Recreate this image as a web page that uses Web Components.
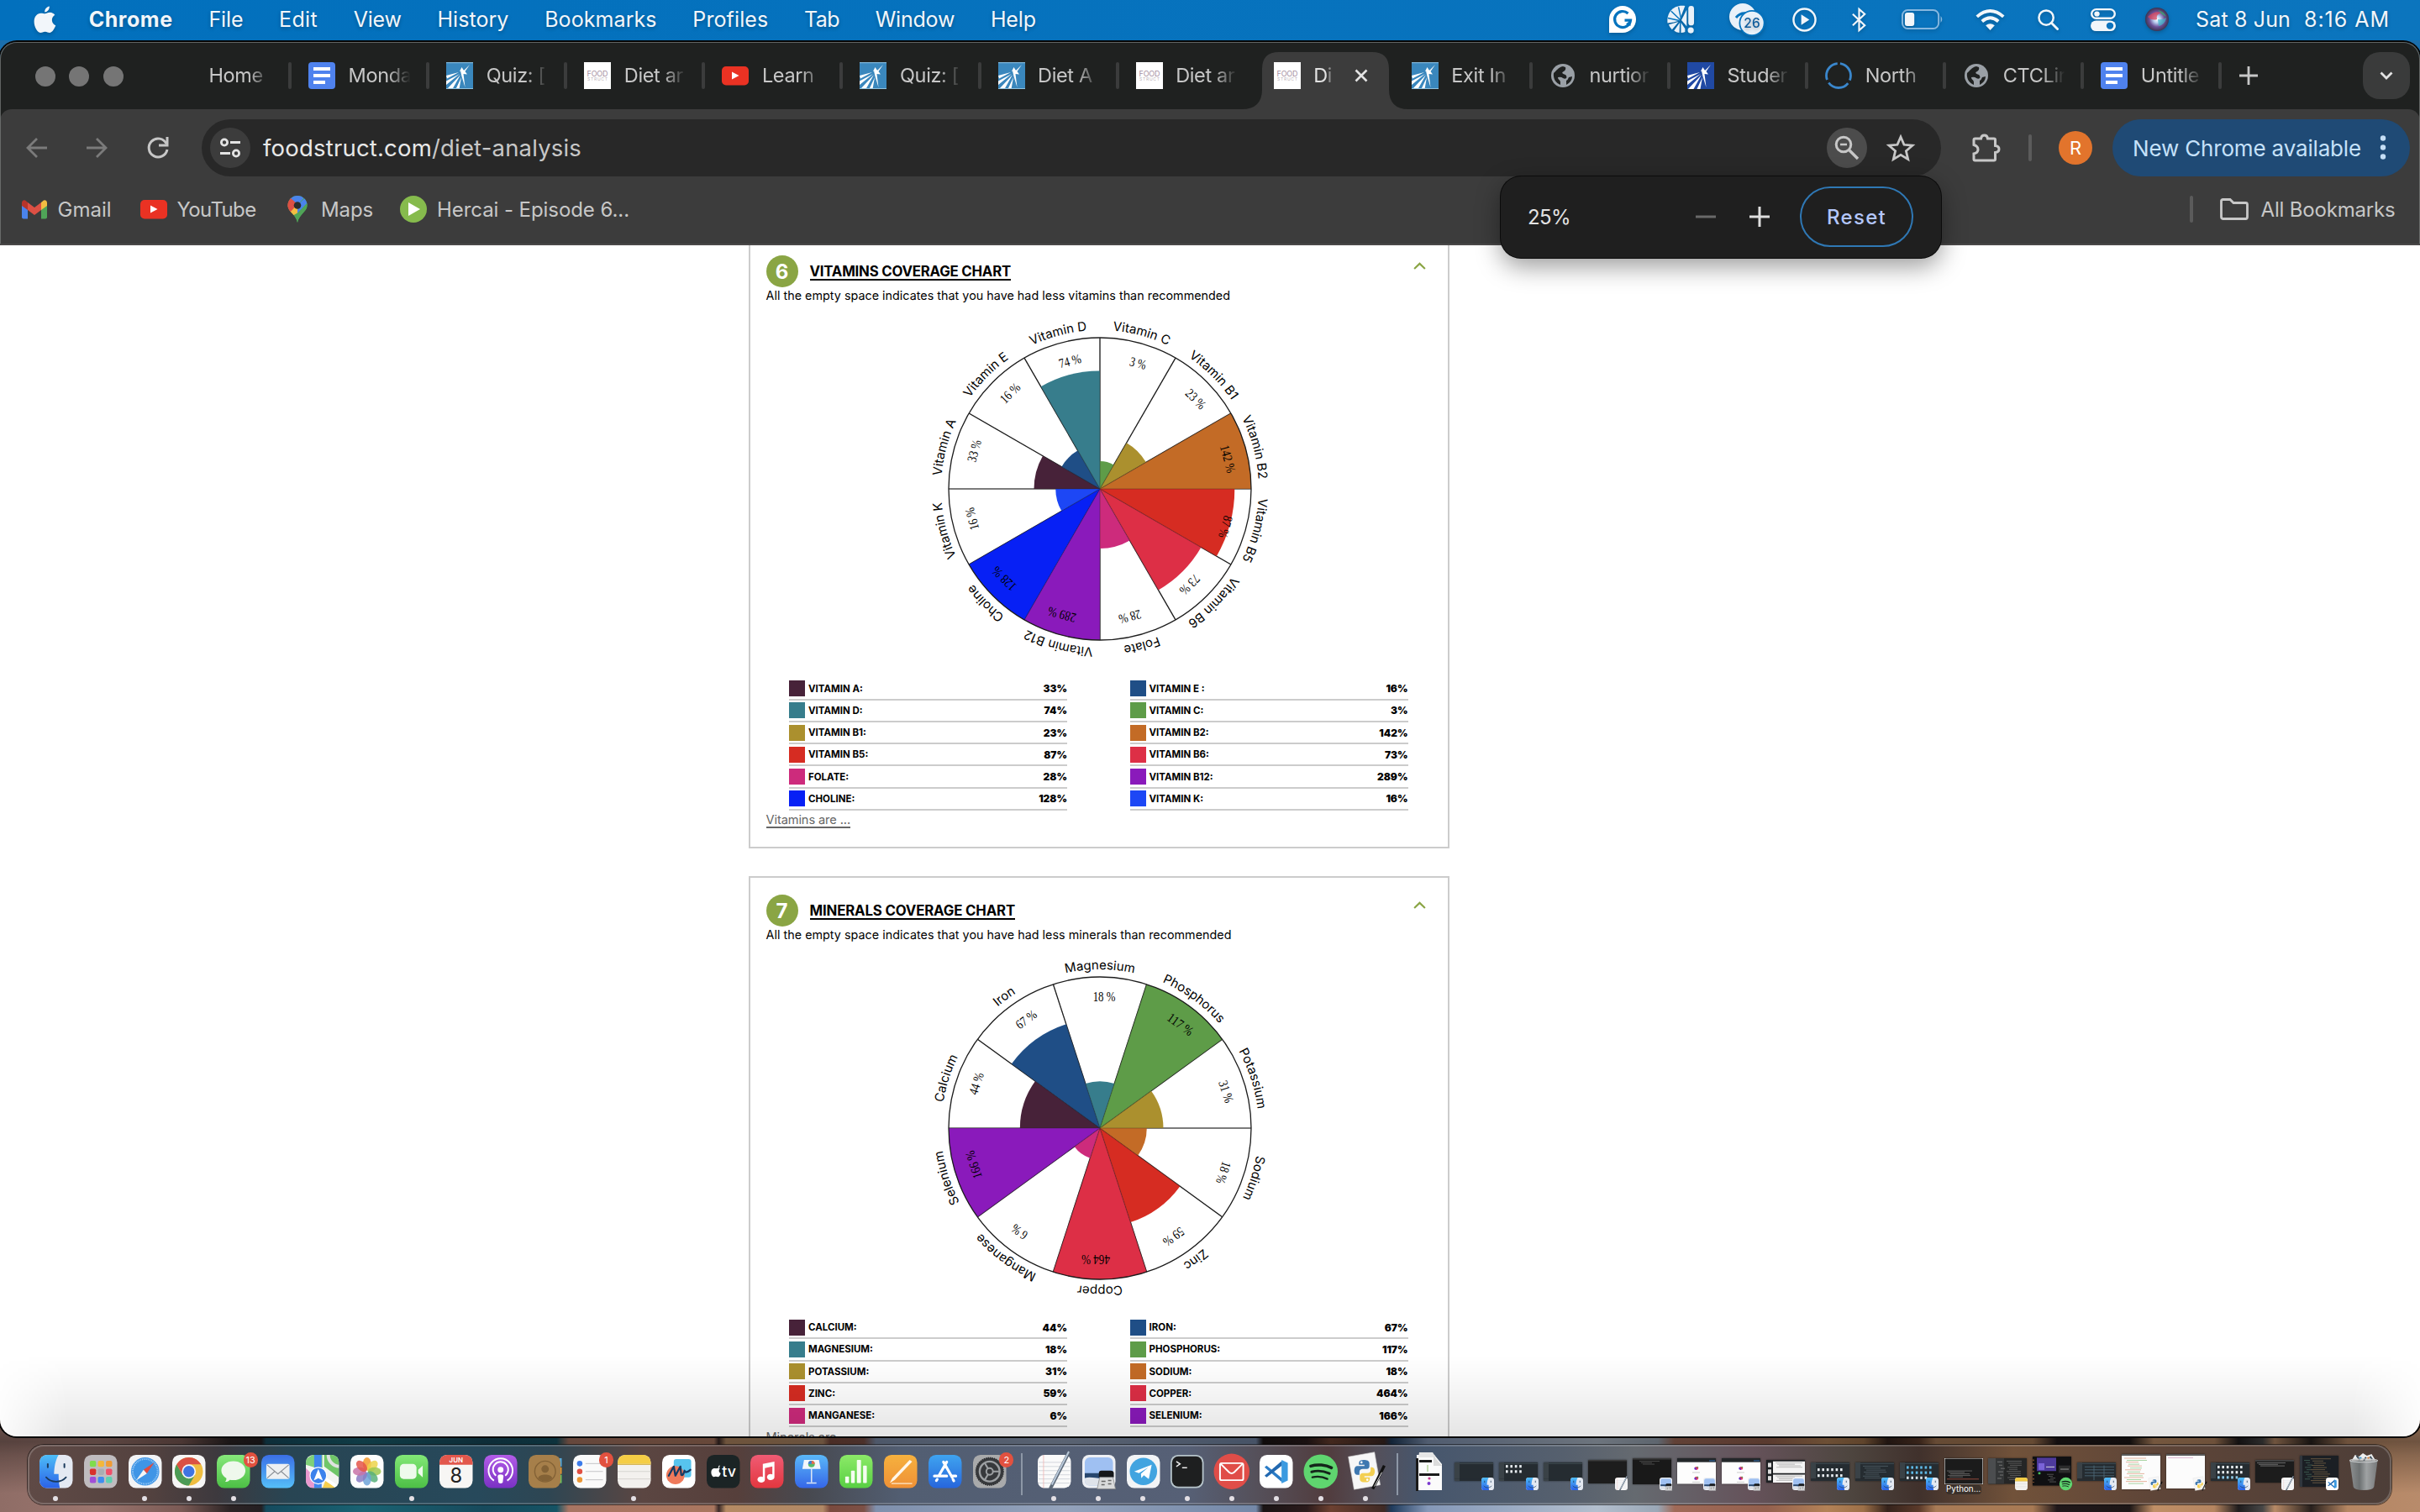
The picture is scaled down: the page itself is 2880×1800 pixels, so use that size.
<!DOCTYPE html>
<html lang="en">
<head>
<meta charset="utf-8">
<title>Diet analysis</title>
<style>
html,body{margin:0;padding:0;width:2880px;height:1800px;overflow:hidden;background:#1b6fae;font-family:Inter,"Liberation Sans",sans-serif}
</style>
</head>
<body>
<mac-desktop></mac-desktop>
<script>
const define=(name,css,html,init)=>customElements.define(name,class extends HTMLElement{
  connectedCallback(){
    if(this.shadowRoot)return;
    const r=this.attachShadow({mode:'open'});
    r.innerHTML=`<style>*{box-sizing:border-box}${css}</style>${typeof html==='function'?html(this):html}`;
    if(init)init(this,r);
  }
});
const A=(e,n,d='')=>e.getAttribute(n)??d;

/* ---------- text set to an exact advance width ---------- */
define('fit-text',':host{display:inline-block;white-space:pre;flex:none}span{display:inline-block;white-space:pre}','<span><slot></slot></span>',(e,r)=>{
  const w=+A(e,'w','0'),s=r.querySelector('span'),n=e.textContent.length;
  if(!w)return;
  const nat=s.getBoundingClientRect().width;
  s.style.letterSpacing=((w-nat)/n)+'px';
  e.style.width=w+'px';
});

/* ---------- icons ---------- */
const FINDER=`<defs><linearGradient id="a" x2="0" y2="1"><stop stop-color="#4dbdf7"/><stop offset="1" stop-color="#2b62e8"/></linearGradient></defs><rect width="40" height="40" rx="9" fill="#e4e9f2"/><path d="M9 0H23C19 7 18 14 17.500 23H23C23 30 23.500 35 24.500 40H9A9 9 0 0 1 0 31V9A9 9 0 0 1 9 0Z" fill="url(#a)"/><path d="M10 11V15M30 11V15" stroke="#1b3a5c" stroke-width="2" stroke-linecap="round"/><path d="M8 27C14 34 26 34 32 27" fill="none" stroke="#1b3a5c" stroke-width="1.800" stroke-linecap="round"/>`;
const TE=`<rect width="40" height="40" rx="8" fill="#fafafa"/><path d="M1 9H39M1 14H39M1 19H39M1 24H39M1 29H39M1 34H39" stroke="#cfd3da" stroke-width=".9"/><path d="M7 0V40" stroke="#f0b6b2" stroke-width=".8"/><path d="M38 -4L15 41" stroke="#5e6a78" stroke-width="4"/><path d="M37.500 -4L17 36" stroke="#b9c9da" stroke-width="2"/>`;
const PREV=`<rect width="40" height="40" rx="8" fill="#eef0f4"/><rect x="3" y="3" width="34" height="34" rx="6" fill="#9fc0f2"/><path d="M3 22H37V28H3Z" fill="#28476e"/><path d="M3 28C12 25 20 31 37 28V31A6 6 0 0 1 31 37H9A6 6 0 0 1 3 31Z" fill="#dfe3ea"/><path d="M20 22Q20 19 23 19H34Q38 19 38 22V27H20Z" fill="#15171a"/><path d="M21 27H37L40 41H18Z" fill="#d9dadb" stroke="#88898a" stroke-width=".8"/><path d="M23 32h5M31 31h4M23 36h4M31 35h4" stroke="#666" stroke-width="1.500"/>`;
const SPOT=`<circle cx="20" cy="20" r="20.500" fill="#5fd56f"/><g fill="none" stroke="#14251a" stroke-linecap="round"><path d="M8 13.500C16 11 26 12 33 15.500" stroke-width="3.600"/><path d="M9 20.500C16 18.500 24 19.500 30.500 22.500" stroke-width="3"/><path d="M10 27C16 25.500 22 26 28 29" stroke-width="2.400"/></g>`;
const VS=`<rect width="40" height="40" rx="9" fill="#fff"/><path d="M6 15L8.500 13L27 28V33Z" fill="#2a7cc7"/><path d="M6 25L8.500 27L27 13V7Z" fill="#2168b0"/><path d="M26.500 6L34 9.500V31L26.500 34.500Z" fill="#3b9ae0"/>`;
const PY=`<g transform="rotate(-10 20 20)"><rect x="3" y="-1" width="32" height="40" fill="#f7f7f7" stroke="#cfcfcf" stroke-width=".6"/></g><path d="M18 6C12 6 12.500 9 12.500 12H19V13.500H10C6 13.500 5.500 24 10 24H13V20.500C13 18 15 17 17 17H22C24 17 25 15.500 25 14V10C25 7 22 6 18 6Z" fill="#3e78b0"/><path d="M20 33C26 33 25.500 30 25.500 27H19V25.500H28C32.500 25.500 33 15 28 15H26.500V18.500C26.500 21 24.500 22 22.500 22H17C15 22 13.500 23.500 13.500 25V29C13.500 32 16 33 20 33Z" fill="#f3cf52"/><circle cx="15.500" cy="9" r="1.300" fill="#fff"/><circle cx="22.500" cy="30" r="1.300" fill="#fff"/><path d="M43 13L29 41" stroke="#111" stroke-width="3.400"/><path d="M40 21L31 38" stroke="#ddd" stroke-width="1"/>`;
const gl=(a,b)=>`<defs><linearGradient id="a" x2="0" y2="1"><stop stop-color="${a}"/><stop offset="1" stop-color="${b}"/></linearGradient></defs><rect width="40" height="40" rx="9" fill="url(#a)"/>`;
const STAR=(bg)=>`<rect width="32" height="32" fill="${bg}"/><g fill="#fff"><path d="M28 3L22.500 11L25 14.500L20.500 14L22.500 30L18.500 17L17 10.500L21.500 9.500Z"/><path d="M18.500 6L21 10L16 11Z"/><path d="M0 16L15 12L1 19.500Z M0 22.500L16 14L0 27Z M1 32L17 15L7.500 32Z M11.500 32L18 18L15.500 32Z"/></g>`;
const ICONS={
finder:['0 0 40 40',FINDER],
launchpad:['0 0 40 40',`<rect width="40" height="40" rx="9" fill="#bfbcbf"/>`+['#7fdc4c','#f4b73a','#f09b35','#d8322c','#a9adb3','#f0506a','#a14ed8','#3f8df0','#5fd0b0'].map((c,i)=>`<rect x="${7+i%3*9.700}" y="${7+Math.floor(i/3)*9.700}" width="7.500" height="7.500" rx="1.800" fill="${c}"/>`).join('')],
safari:['0 0 40 40',`<rect width="40" height="40" rx="9" fill="#f2f3f5"/><circle cx="20" cy="20" r="17" fill="#3f95e6"/><circle cx="20" cy="20" r="15" fill="none" stroke="#bfe0fb" stroke-width="2" stroke-dasharray=".7 1.250"/><path d="M31 9L22 22.500L18 18Z" fill="#e34b3e"/><path d="M9 31L22 22.500L18 18Z" fill="#f5f5f5"/>`],
chrome:['0 0 40 40',`<rect width="40" height="40" rx="9" fill="#f6f6f6"/><circle cx="20" cy="20" r="17" fill="#eebd40"/><path d="M20 20L12.640 24.250L5.280 11.500A17 17 0 0 0 20 37L27.360 24.250Z" fill="#4c9b56"/><path d="M5.280 11.500A17 17 0 0 1 34.720 11.500H20L12.640 24.250Z" fill="#da5144"/><circle cx="20" cy="20" r="8.500" fill="#f6f6f6"/><circle cx="20" cy="20" r="6.800" fill="#3f74e2"/>`],
messages:['0 0 40 40',gl('#86e87b','#4cbf45')+`<path d="M20 7.500C28.500 7.500 34.500 12.500 34.500 19S28.500 30.500 20 30.500C18.500 30.500 17 30.300 15.700 30C14 31.800 12 32.500 10 32.500C11.300 31 11.700 29.500 11.500 28C7.800 26 5.500 22.800 5.500 19C5.500 12.500 11.500 7.500 20 7.500Z" fill="#eef8ec"/>`],
mail:['0 0 40 40',gl('#3b6fe6','#55bff9')+`<rect x="6" y="11" width="28" height="18" rx="2" fill="#eef0f2"/><path d="M7 12L20 23L33 12M7 28L16 20M33 28L24 20" fill="none" stroke="#888d94" stroke-width="1.100"/>`],
maps:['0 0 40 40',`<defs><clipPath id="c"><rect width="40" height="40" rx="9"/></clipPath></defs><g clip-path="url(#c)"><rect width="40" height="40" fill="#f4f4f1"/><path d="M0 5L8 0H20V18L0 12Z" fill="#7fd079"/><path d="M22 0H40V27L22 14Z" fill="#70c668"/><path d="M27 0A14 14 0 0 0 40 14" fill="none" stroke="#dfe2e0" stroke-width="4"/><path d="M0 16L10 26V40H0Z" fill="#e899cf"/><path d="M24 30L36 40H20Z" fill="#f6cf4d"/><rect x="10" width="9" height="40" fill="#3f86ee"/><path d="M13 22L40 40" stroke="#fff" stroke-width="4"/></g><circle cx="15" cy="25" r="10" fill="#3c82ec" stroke="#fff" stroke-width="1.200"/><path d="M15 17L20.500 31L15 28L9.500 31Z" fill="#fff"/>`],
photos:['0 0 40 40',`<rect width="40" height="40" rx="9" fill="#fdfdfd"/>`+['#f39a2d','#ecd44a','#9fc84f','#58b07a','#6fa3d8','#8a7cc4','#c873a8','#e5564a'].map((c,i)=>`<ellipse cx="20" cy="11" rx="5" ry="8" fill="${c}" opacity=".85" transform="rotate(${i*45} 20 20)"/>`).join('')],
facetime:['0 0 40 40',gl('#82e876','#4dbf46')+`<rect x="6" y="11" width="20" height="18" rx="4.500" fill="#eefaec"/><path d="M28 18L33.500 13V27L28 22Z" fill="#eefaec"/>`],
calendar:['0 0 40 40',`<rect width="40" height="40" rx="9" fill="#f7f6f4"/><path d="M0 12V9A9 9 0 0 1 9 0H31A9 9 0 0 1 40 9V12Z" fill="#e2574c"/><text x="20" y="9.500" font-family="Inter" font-weight="600" font-size="8" fill="#fff" text-anchor="middle">JUN</text><text x="20" y="33.500" font-family="Inter" font-size="24" font-weight="400" fill="#222" text-anchor="middle">8</text>`],
podcasts:['0 0 40 40',gl('#b35ce8','#7a31c4')+`<g fill="none" stroke="#fff" stroke-width="2"><path d="M12 31A14.500 14.500 0 1 1 28 31"/><path d="M14.500 25A9.200 9.200 0 1 1 25.500 25"/></g><circle cx="20" cy="18" r="3.500" fill="#fff"/><path d="M16.500 26Q16.500 23.500 20 23.500T23.500 26L22.500 33.500Q20 35.500 17.500 33.500Z" fill="#fff"/>`],
contacts:['0 0 40 40',`<rect x="34" y="4" width="6" height="10" fill="#57a9dc"/><rect x="34" y="15" width="6" height="8" fill="#e5952f"/><rect x="34" y="24" width="6" height="10" fill="#6fc05c"/><rect width="38.500" height="40" rx="9" fill="#a67f4a"/><circle cx="20" cy="20" r="12.500" fill="none" stroke="#836236" stroke-width="1.400"/><circle cx="20" cy="17" r="4.500" fill="#836236"/><path d="M11.500 28C13 22.500 27 22.500 28.500 28Q20 36 11.500 28Z" fill="#836236"/>`],
reminders:['0 0 40 40',`<rect width="40" height="40" rx="9" fill="#fafafa"/><circle cx="8" cy="10.500" r="3.300" fill="#3c7bea"/><circle cx="8" cy="20" r="3.300" fill="#e14f42"/><circle cx="8" cy="30" r="3.300" fill="#eb9735"/><path d="M15 10.500H36M15 20H36M15 30H36" stroke="#c4c4c6" stroke-width="1"/>`],
notes:['0 0 40 40',`<rect width="40" height="40" rx="9" fill="#f3f1ee"/><path d="M0 11V9A9 9 0 0 1 9 0H31A9 9 0 0 1 40 9V11Z" fill="#f5cd45"/><path d="M0 11.500H40" stroke="#cfa93a" stroke-width="1"/><path d="M0 20H40M0 29H40" stroke="#d5d3cf"/>`],
freeform:['0 0 40 40',`<rect width="40" height="40" rx="9" fill="#fff"/><rect x="14" y="5" width="21" height="22" rx="3" fill="#57c4ee"/><circle cx="16" cy="24.500" r="11" fill="#ef7a5b"/><path d="M8 25L14 14L16 25L22 14L23 24Q25 26 27 19Q28 23 34 18" fill="none" stroke="#143a63" stroke-width="2.300" stroke-linejoin="round" stroke-linecap="round"/>`],
tv:['0 0 40 40',`<rect width="40" height="40" rx="9" fill="#1b2425"/><g transform="translate(5.500 12.500) scale(.44)"><path d="M20 8C18 5 21 1 23 0C24 4 22 7 20 8ZM13 9C17 9 18 7 24 9C20 12 20 19 26 22C24 28 21 32 18 32S14 31 12 31S8 32 6 32C2 30 -1 23 0 17C1 11 5 9 8 8.500C10 8.500 12 9 13 9Z" fill="#fff"/></g><text x="18.500" y="26.500" font-family="Inter" font-weight="500" font-size="18" fill="#fff">tv</text>`],
music:['0 0 40 40',gl('#f05b74','#e2373f')+`<path d="M15 11L29 8V27A4.500 3.600 0 1 1 26.500 23.500V14L17.500 16V30A4.500 3.600 0 1 1 15 26.500Z" fill="#fff"/>`],
keynote:['0 0 40 40',gl('#5ab8f8','#3566e8')+`<path d="M11 6H29L31 17H9Z" fill="#f2f6fb"/><circle cx="20" cy="11" r="4" fill="#58b96a"/><path d="M20 7A4 4 0 0 1 24 11H20Z" fill="#ee6a4c"/><path d="M16 11A4 4 0 0 1 20 7V11Z" fill="#3f78df"/><path d="M20 17V33M14 34H26" stroke="#dbe6f5" stroke-width="1.600"/>`],
numbers:['0 0 40 40',gl('#8cea68','#58cf43')+`<g fill="#f4fdf0"><rect x="7" y="26" width="4.500" height="8" rx=".8"/><rect x="14" y="19" width="4.500" height="15" rx=".8"/><rect x="21" y="6" width="5" height="28" rx=".8"/><rect x="28.500" y="13" width="4.500" height="21" rx=".8"/></g>`],
pages:['0 0 40 40',gl('#f6b13e','#ef9136')+`<path d="M31 6L34 8L13 30L7 34L10 28Z" fill="#fff7ea"/><path d="M9 34.500H34" stroke="#fff0d8" stroke-width="1.200"/>`],
appstore:['0 0 40 40',gl('#3fa4f0','#2766dc')+`<g stroke="#fff" stroke-width="3.200" stroke-linecap="round" fill="none"><path d="M22 8.500L12.500 25M18 8.500L28.500 27M7 25.500H22M28 25.500H33M10.500 29.500L9.500 31M29.500 29.500L30.500 31.300"/></g>`],
settings:['0 0 40 40',`<rect width="40" height="40" rx="9" fill="#a9aaab"/><circle cx="20" cy="20" r="16.500" fill="#37393c" stroke="#2b2c2e" stroke-width="1.500" stroke-dasharray="1.500 1"/><circle cx="20" cy="20" r="12" fill="none" stroke="#9da0a3" stroke-width="2.400"/><circle cx="20" cy="20" r="4" fill="none" stroke="#9da0a3" stroke-width="2"/><path d="M24 20H32M18 16.500L14 9.600M18 23.500L14 30.400" stroke="#9da0a3" stroke-width="2.200"/>`],
textedit:['0 0 40 40',TE],preview:['0 0 40 40',PREV],
telegram:['0 0 40 40',`<rect width="40" height="40" rx="9" fill="#f2f4f6"/><circle cx="20" cy="20" r="16.500" fill="#41a4e0"/><path d="M9 20L30 12L26.500 29L20.500 24.500L17.500 28L17 22.800L26 15L14.500 22Z" fill="#fff"/>`],
terminal:['0 0 40 40',`<rect width="40" height="40" rx="9" fill="#b8c6cc"/><rect x="1.800" y="1.800" width="36.400" height="36.400" rx="7.500" fill="#1e1f20"/><path d="M7 8L11.500 11L7 14" fill="none" stroke="#eee" stroke-width="1.500"/><path d="M14 15.500H20" stroke="#eee" stroke-width="1.500"/>`],
redmail:['0 0 40 40',`<circle cx="20" cy="20" r="21.500" fill="#e04d48"/><rect x="6" y="10" width="28" height="20.500" rx="2" fill="none" stroke="#fff" stroke-width="2"/><path d="M7 11L17 21Q20 23.500 23 21L33 11" fill="none" stroke="#fff" stroke-width="2"/>`],
vscode:['0 0 40 40',VS],spotify:['0 0 40 40',SPOT],idle:['0 0 40 40',PY],
apple:['0 0 28 34',`<path d="M19.500 0.500C19.800 4.500 16.500 7.800 13.700 7.700C13.300 4.200 16.600 .8 19.500 .5ZM13.900 9.600C15.500 9.600 17.400 8 20.300 8C22.800 8.100 24.900 9.300 26.200 11.200C21 14.600 21.800 21.700 27.200 24C26 27.600 22.900 33 19.700 33C17.600 33 16.700 31.700 14.200 31.700C11.600 31.700 10.600 33 8.700 33C5.200 33 .6 26.100 .6 19.200C.6 12.700 4.700 8.900 8.800 8.900C11.200 8.900 12.800 9.600 13.900 9.600Z" fill="#f2f6fa"/>`],
grammarly:['0 0 32 32',`<path d="M16 0A16 16 0 1 1 16 32H0V16A16 16 0 0 1 16 0Z" fill="#fff"/><path d="M22.500 9A9.500 9.500 0 1 0 25.500 17.200H18.500" fill="none" stroke="#0573be" stroke-width="3.200"/><path d="M20 21.500L25.500 24V17" fill="#0573be"/>`],
shell:['0 0 34 34',`<path d="M22 0C8 -2 -1 8 0.500 21L8 20L15 18Z" fill="#e9f1f9"/><path d="M2 23L14 19.500L6 29Q3 26.500 2 23ZM8.500 30.500L15.500 20.500L15 33Q11 33 8.500 30.500ZM17 33V20.500L22 28V32Q20 33 17 33Z" fill="#e9f1f9"/><path d="M17.500 17.500L24 5V25Z" fill="#e9f1f9"/><path d="M14 1.500L17 15.500M5 6.500L16 17M1 15L15 18" stroke="#0573be" stroke-width="1.500"/><rect x="26" y="0" width="7" height="24" rx="3.500" fill="#e9f1f9"/><circle cx="29" cy="30" r="3.700" fill="#e9f1f9"/>`],
chat26:['0 0 42 38',`<circle cx="16" cy="16" r="16" fill="#e9f1f9"/><path d="M8 17Q13 11 20 12" stroke="#0573be" stroke-width="3" fill="none"/><circle cx="27" cy="23.500" r="15.500" fill="#0573be"/><circle cx="27" cy="23.500" r="13.700" fill="#e9f1f9"/><text x="27" y="29" text-anchor="middle" font-family="Inter" font-weight="500" font-size="15.500" fill="#0f5c9c">26</text>`],
play:['0 0 30 30',`<circle cx="15" cy="15" r="13.500" fill="none" stroke="#f2f6fa" stroke-width="2.500"/><path d="M11 8.500L21 15L11 21.500Z" fill="#f2f6fa"/>`],
bt:['0 0 20 30',`<path d="M2 8L17 22L10 28V2L17 8L2 22" fill="none" stroke="#f2f6fa" stroke-width="2.300"/>`],
battery:['0 0 51 24',`<rect x="1" y="1" width="44" height="22" rx="6.500" fill="none" stroke="#86b8e0" stroke-width="2"/><rect x="4" y="4" width="11.500" height="16" rx="3" fill="#f2f6fa"/><path d="M47.500 8Q51 12 47.500 16Z" fill="#86b8e0"/>`],
wifi:['0 0 36 26',`<path d="M18 26L12.500 20Q18 16 23.500 20Z" fill="#f2f6fa"/><path d="M8 15Q18 6.500 28 15" fill="none" stroke="#f2f6fa" stroke-width="4"/><path d="M1.800 9.200Q18 -5 34.200 9.200" fill="none" stroke="#f2f6fa" stroke-width="4"/>`],
search:['0 0 26 26',`<circle cx="10.500" cy="10.500" r="9" fill="none" stroke="#f2f6fa" stroke-width="2.600"/><path d="M17 17L24.500 24.500" stroke="#f2f6fa" stroke-width="3" stroke-linecap="round"/>`],
control:['0 0 30 28',`<rect x="1.200" y="1.200" width="27.600" height="11" rx="5.500" fill="none" stroke="#f2f6fa" stroke-width="2.400"/><circle cx="7.500" cy="6.700" r="3.200" fill="#f2f6fa"/><rect y="15" width="30" height="13" rx="6.500" fill="#f2f6fa"/><circle cx="23" cy="21.500" r="4.200" fill="#0d73bd"/>`],
siri:['0 0 28 28',`<defs><radialGradient id="a"><stop stop-color="#fff"/><stop offset=".3" stop-color="#b9cdf0"/><stop offset=".65" stop-color="#6b4f96"/><stop offset="1" stop-color="#3b3550"/></radialGradient></defs><circle cx="14" cy="14" r="14" fill="url(#a)"/><path d="M3 11Q11 3 20 6Q12 8 14 14Q8 16 3 11Z" fill="#d8435a" opacity=".75"/><path d="M16 22Q24 20 25 12Q21 15 15 14Z" fill="#3fb6c9" opacity=".7"/><path d="M15 3Q23 5 25 11Q19 8 15 3Z" fill="#3ba56e" opacity=".8"/>`],
docs:['0 0 32 32',`<rect width="32" height="32" rx="4" fill="#4f82ee"/><path d="M6 8H26M6 16H26M6 24H20" stroke="#fff" stroke-width="4"/>`],
swoosh:['0 0 32 32',STAR('#3a87bd')+`<path d="M0 .7H32M0 31.500H32" stroke="#8fc0dd" stroke-width="1"/>`],
swooshdark:['0 0 32 32',STAR('#2049a3')],
food:['0 0 32 32',`<rect width="32" height="32" fill="#fff"/><text x="16" y="17" font-family="Inter" font-size="9" font-weight="400" fill="#a58f9f" text-anchor="middle" textLength="25">FOOD</text><text x="16" y="21.500" font-family="Inter" font-size="5" fill="#bdb4ba" text-anchor="middle" textLength="24">STRUCT</text>`],
youtube:['0 0 32 32',`<rect y="5" width="32" height="22.500" rx="5" fill="#ea3223"/><path d="M12 11.500L20.500 16L12 20.500Z" fill="#fff"/>`],
globe:['0 0 32 32',`<circle cx="16" cy="16" r="14" fill="#9aa0a6"/><path d="M16 5C10 6 8 11 5 13C4 20 8 25 13 27V24C13 21 10 21 10 18Q14 17 16 19C20 21 22 18 19 15C15 14 14 12 17 11Q20 9 19 6Z" fill="#1f2120"/><path d="M20 27Q27 23 27 17L23 18Q22 21 20 22Z" fill="#1f2120"/>`],
ring:['0 0 32 32',`<circle cx="16" cy="16" r="14.500" fill="none" stroke="#3a87cc" stroke-width="2.800" stroke-dasharray="26.400 4" stroke-dashoffset="-2" transform="rotate(-90 16 16)"/>`],
none:['0 0 32 32',''],
close:['0 0 16 16',`<path d="M1.500 1.500L14.500 14.500M14.500 1.500L1.500 14.500" stroke="#e3e3e3" stroke-width="2.600"/>`],
plus:['0 0 22 22',`<path d="M11 0V22M0 11H22" stroke="#c7c7c7" stroke-width="2.800"/>`],
chev:['0 0 16 10',`<path d="M1.500 1.500L8 8L14.500 1.500" fill="none" stroke="#e3e3e3" stroke-width="2.800"/>`],
back:['0 0 26 26',`<path d="M25 13H2.500M13 2L2 13L13 24" fill="none" stroke="#7b7b7b" stroke-width="2.800"/>`],
fwd:['0 0 26 26',`<path d="M1 13H23.500M13 2L24 13L13 24" fill="none" stroke="#7b7b7b" stroke-width="2.800"/>`],
reload:['0 0 26 26',`<path d="M23 8A11 11 0 1 0 24 15" fill="none" stroke="#c7c7c7" stroke-width="3"/><path d="M24 0V10H14" fill="none" stroke="#c7c7c7" stroke-width="3"/>`],
tune:['0 0 24 24',`<g fill="none" stroke="#e3e3e3" stroke-width="2.800"><circle cx="5" cy="5.500" r="3.600"/><path d="M12 5.500H24M0 18.500H12"/><circle cx="19" cy="18.500" r="3.600"/></g>`],
zoomout:['0 0 30 30',`<circle cx="11" cy="11" r="8.800" fill="none" stroke="#c7c7c7" stroke-width="3"/><path d="M7 11H15" stroke="#c7c7c7" stroke-width="2.400"/><path d="M17.500 17.500L28 28" stroke="#c7c7c7" stroke-width="3.400"/>`],
star:['0 0 34 32',`<path d="M17 3L21 12.300L31 13.200L23.400 19.800L25.700 29.600L17 24.400L8.300 29.600L10.600 19.800L3 13.200L13 12.300Z" fill="none" stroke="#c7c7c7" stroke-width="2.800"/>`],
puzzle:['0 0 34 34',`<path d="M2 7.500Q2 6 3.500 6H10.500Q11 2 14.500 2T18.500 6H26Q27.500 6 27.500 7.500V14.500Q32 15 32 18.500T27.500 22.500V30.500Q27.500 32 26 32H3.500Q2 32 2 30.500V24Q7 23 7 19T2 13.500Z" fill="none" stroke="#c7c7c7" stroke-width="3"/>`],
dots:['0 0 8 30',`<g fill="#c5def5"><circle cx="4" cy="3.500" r="3.200"/><circle cx="4" cy="14.500" r="3.200"/><circle cx="4" cy="25.500" r="3.200"/></g>`],
gmail:['0 0 30 23',`<path d="M0 3V20.500Q0 22.500 2 22.500H7V8Z" fill="#4a83ec"/><path d="M23 8V22.500H28Q30 22.500 30 20.500V3Z" fill="#4fa457"/><path d="M23 3V12L30 7V3Q29.500 -.5 26 .5Z" fill="#f2bd42"/><path d="M7 3V12L0 7V3Q.5 -.5 4 .5Z" fill="#b8342a"/><path d="M7 3L15 9L23 3V12L15 18L7 12Z" fill="#dd5044"/>`],
pin:['0 0 24 32',`<defs><clipPath id="c"><path d="M12 0A11.500 11.500 0 0 1 23.500 11.500C23.500 19 14 22 12 32C10 22 .5 19 .5 11.500A11.500 11.500 0 0 1 12 0Z"/></clipPath></defs><g clip-path="url(#c)"><rect width="24" height="32" fill="#4fa457"/><path d="M0 6L12 11L3 22H0Z" fill="#dd5044"/><path d="M0 20L14 5L18 17L6 24Z" fill="#f2bd42"/><path d="M2 0H22L12 11L3 5Z" fill="#4a83ec"/><path d="M0 4L4 3L12 10L4 19H0Z" fill="#dd5044"/><path d="M12 11L24 0V10L12 25Z" fill="#4a83ec"/><path d="M24 8L8 25V32H24Z" fill="#4fa457"/></g><circle cx="12" cy="11.500" r="4.300" fill="#2c2c2c"/>`],
hercai:['0 0 32 32',`<circle cx="16" cy="16" r="16" fill="#86bb4d"/><path d="M10 8L24 16L10 24Z" fill="#fff"/>`],
folder:['0 0 34 26',`<path d="M1.500 3.500Q1.500 1.500 3.500 1.500H12L16 5.500H30.500Q32.500 5.500 32.500 7.500V22Q32.500 24.500 30.500 24.500H3.500Q1.500 24.500 1.500 22Z" fill="none" stroke="#c7c7c7" stroke-width="2.800"/>`],
minus:['0 0 24 24',`<path d="M0 12H24" stroke="#696969" stroke-width="3"/>`],
plus2:['0 0 24 24',`<path d="M0 12H24M12 0V24" stroke="#dedede" stroke-width="3"/>`],
up:['0 0 16 9',`<path d="M1.200 8L8 1.800L14.800 8" fill="none" stroke="#8aa544" stroke-width="2.300"/>`],
doc:['0 0 32 46',`<path d="M1 3H22L31 14V45H1Z" fill="#fbfbfb"/><path d="M0 7H3V46H0Z" fill="#1a1a1a"/><path d="M4 9H19V12H4ZM4 25H28V28H4Z" fill="#1a1a1a"/><path d="M4 0H20L24 6H3Z" fill="#e6e6e6"/><path d="M21 4V16H31Z" fill="#dcdcdc"/><path d="M14 15V23" stroke="#8fbf6a" stroke-width="1"/><circle cx="16" cy="31" r="1.600" fill="#c23a8a"/><circle cx="15.500" cy="37" r="2" fill="#7b3ad0"/>`],
trash:['0 0 36 46',`<defs><linearGradient id="a"><stop stop-color="#8d9091"/><stop offset=".35" stop-color="#6d7172"/><stop offset=".6" stop-color="#9fa2a3"/><stop offset="1" stop-color="#77797a"/></linearGradient></defs><path d="M3 10L7 3L12 5L17 1L22 4L28 2L33 10Z" fill="#eceeee"/><path d="M9 4L13 9M21 6L18 10M26 5L29 9" stroke="#3b4b57" stroke-width="2"/><circle cx="14" cy="7" r="1.500" fill="#3f9ad2"/><circle cx="24" cy="7" r="1.500" fill="#d9813d"/><path d="M.5 10H35.500L31 42Q30 46 18 46T5 42Z" fill="url(#a)"/><ellipse cx="18" cy="10" rx="17.500" ry="2" fill="none" stroke="#c5c8c9" stroke-width="1.200"/>`]
};
define('ui-icon',':host{display:block;flex:none}svg{display:block;width:100%;height:100%;overflow:visible}',e=>{
  const [vb,s]=ICONS[A(e,'name')];return `<svg viewBox="${vb}" preserveAspectRatio="none">${s}</svg>`},
  e=>{e.style.width=A(e,'w')+'px';e.style.height=A(e,'h',A(e,'w'))+'px'});
const ic=(n,w,h=w,m=0)=>`<ui-icon name="${n}" w="${w}" h="${h}" style="margin-left:${m}px"></ui-icon>`;
const ft=(t,w,m=0,c='')=>`<fit-text class="${c}" w="${w}" style="margin-left:${m}px">${t}</fit-text>`;

/* ---------- menu bar ---------- */
define('menu-bar',`:host{display:flex;justify-content:space-between;align-items:center;height:48px;padding:0 36px 2px 40px;background:linear-gradient(90deg,#0270bd,#0b75be);color:#f2f6fa;font-size:25px;text-shadow:0 2px 4px #0004}
nav,div{display:flex;align-items:center}nav{gap:42.700px}ui-icon{filter:drop-shadow(0 2px 2px #0003)}.b{font-weight:700}`,
`<nav>${ic('apple',27,33)}${ft('Chrome',100,-4,'b')}${[['File',41],['Edit',46],['View',57],['History',85],['Bookmarks',133.500],['Profiles',90],['Tab',42],['Window',94.500],['Help',54]].map(a=>ft(...a)).join('')}</nav>
<div>${ic('grammarly',32)}${ic('shell',33,33,37)}${ic('chat26',42,38,41)}${ic('play',29,29,33)}${ic('bt',19,29,41)}${ic('battery',50,24,41)}${ic('wifi',35,25,38)}${ic('search',25,25,39)}${ic('control',30,27,38)}${ic('siri',28,28,35)}${ft('Sat 8 Jun',113,32)}${ft('8:16 AM',102,16)}</div>`);

/* ---------- tabs ---------- */
define('browser-tab',`:host{display:flex;flex:none;align-items:center;width:164.1px;height:80px;padding:0 0 1px 22px;position:relative;font-size:23.500px;color:#c7c7c7}
.t{width:75px;height:34px;line-height:34px;margin-left:15.500px;overflow:hidden;white-space:pre;letter-spacing:-.35px;-webkit-mask-image:linear-gradient(90deg,#000 62%,transparent 98%);mask-image:linear-gradient(90deg,#000 62%,transparent 98%)}
.s{width:4px;height:32px;margin-left:auto;margin-right:-2px;border-radius:2px;background:#3b3c3c}
:host([nosep]) .s{visibility:hidden}
:host([home]) .t{margin-left:13.500px}
:host([active]) .t{width:24px;color:#e3e3e3}
:host([active]) ui-icon,:host([active]) .t{position:relative}
.bg{display:none}:host([active]) .bg{display:block;position:absolute;left:-16px;top:12px;width:198px;height:68px}`,
e=>`<svg class="bg" viewBox="0 0 198 68"><path d="M0 68Q24 68 24 44V20Q24 0 44 0H155Q175 0 175 20V44Q175 68 198 68Z" fill="#3c3c3c"/></svg>${ic(A(e,'icon'),32)}<div class="t"><slot></slot></div>${e.hasAttribute('active')?`<ui-icon name="close" w="16" h="16" style="margin-left:25px;position:relative"></ui-icon>`:''}<div class="s"></div>`);
define('tab-strip',`:host{display:flex;align-items:center;height:80px;background:#1f2120;padding-left:42px;padding-right:12px}
.l{display:flex;gap:16.400px;width:139px;padding-top:2px}.l i{width:24px;height:24px;border-radius:50%;background:#757575}
.d{width:56px;height:56px;border-radius:20px;background:#3a3b3b;margin-left:auto;display:flex;align-items:center;justify-content:center}`,
`<div class="l"><i></i><i></i><i></i></div>${[['none','Home','home'],['docs','Monda'],['swoosh','Quiz: ['],['food','Diet ar'],['youtube','Learn'],['swoosh','Quiz: ['],['swoosh','Diet A'],['food','Diet ar','nosep'],['food','Di','active nosep'],['swoosh','Exit In'],['globe','nurtior'],['swooshdark','Studer'],['ring','North'],['globe','CTCLir'],['docs','Untitle']].map(([i,t,x=''])=>`<browser-tab icon="${i}" ${x}>${t}</browser-tab>`).join('')}${ic('plus',22,22,23)}<div class="d">${ic('chev',16,10)}</div>`);

/* ---------- toolbar ---------- */
define('tool-bar',`:host{display:block;background:#1f2120}.w{display:flex;align-items:center;height:92px;padding:0 12px 0 31px;background:#3c3c3c;border-radius:14px 14px 0 0}
.o{display:flex;align-items:center;width:2070px;height:68px;margin-left:39px;border-radius:34px;background:#282828;padding:0 31px 0 10px;font-size:27.500px;color:#c7c7c7}
.c{width:48px;height:48px;border-radius:50%;background:#3c3c3c;display:flex;align-items:center;justify-content:center;flex:none}.z{background:#4c4c4c;margin-left:auto}
.h{color:#e8e8e8}.v{width:4px;height:32px;border-radius:2px;background:#5b5b5b;margin-left:33px}
.r{width:40px;height:40px;border-radius:50%;background:#e2742c;color:#fff;font-size:22px;display:flex;align-items:center;justify-content:center;margin-left:32px}
.n{display:flex;align-items:center;width:354px;height:68px;border-radius:34px;background:#1f4a75;color:#c5e1fa;font-size:26px;margin-left:auto}`,
`<div class="w">${ic('back',26)}${ic('fwd',26,26,45)}${ic('reload',26,26,47)}
<div class="o"><div class="c">${ic('tune',24)}</div>${ft('foodstruct.com',201,15,'h')}${ft('/diet-analysis',178)}<div class="c z">${ic('zoomout',30)}</div>${ic('star',34,32,23)}</div>
${ic('puzzle',34,34,37)}<div class="v"></div><div class="r">R</div><div class="n">${ft('New Chrome available',272,24)}${ic('dots',8,30,22)}</div></div>`);

define('bookmarks-bar',`:host{display:flex;align-items:center;height:70px;padding:0 29.500px 14px 25.500px;background:#3c3c3c;border-bottom:2px solid #4a4848;box-sizing:border-box;color:#c7c7c7;font-size:24px}.v{width:4px;height:32px;border-radius:2px;background:#5b5b5b;margin-left:auto}`,
`${ic('gmail',30,23)}${ft('Gmail',64,13)}${ic('youtube',32,32,34)}${ft('YouTube',94,12)}${ic('pin',24,32,37)}${ft('Maps',62,16.500)}${ic('hercai',32,32,32)}${ft('Hercai - Episode 6...',229,12)}<div class="v"></div>${ic('folder',34,26,32)}${ft('All Bookmarks',160,15)}`);

define('zoom-bubble',`:host{display:flex;align-items:center;position:absolute;left:1786px;top:209.500px;width:524px;height:97px;border-radius:24px;background:#1f1f1f;box-shadow:0 0 0 1px #0b0b0b,0 10px 30px #0006;padding:0 33px 0 32px;color:#e3e3e3;font-size:24px;z-index:5}
.r{width:136px;height:72px;border-radius:36px;border:2.500px solid #2f78b5;color:#b3c6fa;font-weight:500;display:flex;align-items:center;justify-content:center;margin-left:36px}`,
`${ft('25%',51)}${ic('minus',24,24,149)}${ic('plus2',24,24,40)}<div class="r">${ft('Reset',71)}</div>`);

/* ---------- coverage wheel ---------- */
define('coverage-wheel',`:host{display:block;height:440px}svg{display:block;margin:0 auto;overflow:visible;position:relative;left:1px}.n{font:15px Inter,sans-serif}.p{font:15.800px "Liberation Serif",serif}`,e=>{
  const d=JSON.parse(A(e,'data')),n=d.length,st=2*Math.PI/n,P=(r,a)=>`${(220+r*Math.sin(a)).toFixed(2)} ${(220-r*Math.cos(a)).toFixed(2)}`;
  let f='',l='',t='',defs='';
  d.forEach(([name,v,c],i)=>{
    const a=-Math.PI/2+i*st,b=a+st,m=(a+b)/2,r=v>=100?180:28.5+1.515*v;
    f+=`<path d="M220 220L${P(r,a)}A${r} ${r} 0 0 1 ${P(r,b)}Z" fill="${c}"/>`;
    l+=`<path d="M220 220L${P(180,a)}" stroke="#1c1c1c" stroke-width="1.200"/>`;
    defs+=`<path id="p${i}" d="M${P(189,m-.9)}A189 189 0 0 1 ${P(189,m+.9)}"/>`;
    t+=`<text class="n" text-anchor="middle"><textPath href="#p${i}" startOffset="50%">${name}</textPath></text>`;
    const w=12.5+7.1*String(v).length;
    t+=`<text class="p" transform="rotate(${m*180/Math.PI} 220 220)" x="${225-w/2}" y="69" textLength="${w}" lengthAdjust="spacingAndGlyphs">${v} %</text>`;
  });
  return `<svg width="440" height="440" viewBox="0 0 440 440"><defs>${defs}</defs>${l}${f}<g opacity=".3">${l}</g><circle cx="220" cy="220" r="180" fill="none" stroke="#1c1c1c" stroke-width="1.300"/>${t}</svg>`;
});

define('legend-row',`:host{display:flex;align-items:center;width:331px;height:26.260px;border-bottom:2px solid #ccc;font-weight:700;font-size:11.500px;color:#000}
i{width:19px;height:19px;margin-right:4px;background:var(--c)}b{margin-left:auto;font-size:12px}`,
e=>`<i></i><slot></slot><b>${A(e,'v')}%</b>`);

define('coverage-card',`:host{display:flex;flex-direction:column;width:834.500px;height:728px;border:2px solid #ccc;padding:20px 19px 0;background:#fff;color:#000;box-sizing:border-box;flex:none}
header{display:flex;align-items:center;height:38px}
.b{width:38px;height:38px;border-radius:50%;background:#8aa544;color:#fff;font-weight:700;font-size:24px;display:flex;align-items:center;justify-content:center}
.t{font-weight:700;font-size:16.800px;margin-left:14px;position:relative;border-bottom:2px solid #000;line-height:17px;padding-top:3px}
ui-icon{margin:-13px 7px 0 auto!important}
.s{height:20px;line-height:20px;font-size:14.300px}
.g{display:grid;grid-template-columns:331px 331px;column-gap:74.500px;padding:5px 0 0 27.500px}
.l{font-size:14.600px;color:#666;height:24px;display:flex;align-items:center}.l span{border-bottom:2px solid #666;line-height:15px;padding-top:2px}`,
e=>{const d=JSON.parse(A(e,'data'));
return `<header><div class="b">${A(e,'num')}</div><div class="t">${ft(A(e,'name')+' COVERAGE CHART',A(e,'tw'))}</div>${ic('up',15,9)}</header>
<div class="s">${ft(`All the empty space indicates that you have had less ${A(e,'name').toLowerCase()} than recommended`,A(e,'sw'))}</div>
<coverage-wheel data='${A(e,'data')}'></coverage-wheel>
<div class="g">${d.map(([n,v,c])=>`<legend-row style="--c:${c}" v="${v}">${n.toUpperCase()}${n==='Vitamin E'?' ':''}:</legend-row>`).join('')}</div>
<div class="l"><span>${ft(A(e,'more'),A(e,'lw'))}</span></div>`});

const C=['#472239','#1f4e86','#377d8c','#5e9c48','#ab902e','#c36b26','#d62c22','#dd2f46','#cd2b7c','#8a1abb','#0720f5','#1d47f5'];
const mk=a=>JSON.stringify(a.map(([n,v],i)=>[n,v,C[i]]));
const VIT=mk([['Vitamin A',33],['Vitamin E',16],['Vitamin D',74],['Vitamin C',3],['Vitamin B1',23],['Vitamin B2',142],['Vitamin B5',87],['Vitamin B6',73],['Folate',28],['Vitamin B12',289],['Choline',128],['Vitamin K',16]]);
const MIN=mk([['Calcium',44],['Iron',67],['Magnesium',18],['Phosphorus',117],['Potassium',31],['Sodium',18],['Zinc',59],['Copper',464],['Manganese',6],['Selenium',166]]);
define('page-view',`:host{display:flex;flex-direction:column;flex:1;min-height:0;overflow:hidden;background:#fff;position:relative;padding-left:890.500px}
.c{display:flex;flex-direction:column;gap:32.700px;margin-top:-9.600px}
.f{position:absolute;left:0;right:0;bottom:0;height:96px;background:linear-gradient(#0000,#00000008 35%,#0000001a);-webkit-mask-image:linear-gradient(90deg,#0002,#000 80px,#000 2800px,#0002);mask-image:linear-gradient(90deg,#0002,#000 80px,#000 2800px,#0002)}`,
`<div class="c"><coverage-card num="6" name="VITAMINS" tw="239.500" sw="552.500" more="Vitamins are ..." lw="100.500" data='${VIT}'></coverage-card>
<coverage-card num="7" name="MINERALS" tw="244.500" sw="554" more="Minerals are ..." lw="100.500" data='${MIN}'></coverage-card></div><div class="f"></div>`);

define('browser-window',`:host{display:flex;flex-direction:column;position:relative;width:2880px;height:1660px;margin-top:2px;border-radius:20px;box-shadow:0 0 0 2px #050505}
.in{display:flex;flex-direction:column;flex:1;min-height:0;border-radius:20px;overflow:hidden}
.e{position:absolute;left:0;right:0;top:0;height:240px;border:1.500px solid #777b7a;border-bottom:0;border-radius:20px 20px 0 0;pointer-events:none;opacity:.75}`,
`<div class="in"><tab-strip></tab-strip><tool-bar></tool-bar><bookmarks-bar></bookmarks-bar><page-view></page-view></div><div class="e"></div>`);

/* ---------- dock ---------- */
const dotsRow=(n,y,c,x0=8)=>Array.from({length:n},(_,i)=>`<rect x="${x0+i*5.400}" y="${y}" width="2.600" height="3.600" fill="${c}"/>`).join('');
const side=`<rect width="46" height="22" fill="#252c31"/><rect width="6" height="22" fill="#3a4247"/><path d="M6 1.500H46" stroke="#3b464c" stroke-width="1.500"/>`;
const lines=(n,x,w,c,y0=4,g=2.600)=>Array.from({length:n},(_,i)=>`<path d="M${x+i*7%5} ${y0+i*g}h${w-(i*11%Math.max(1,w*.5|0))}" stroke="${c}" stroke-width=".8"/>`).join('');
const pie=(x,y)=>`<circle cx="${x}" cy="${y}" r="2.300" fill="#e33a63"/><path d="M${x} ${y}L${x-2.500} ${y-1}V${y+2}Z" fill="#3a32d8"/><path d="M${x} ${y}L${x+2.500} ${y-1.500}L${x+1} ${y-2.600}Z" fill="#44a051"/><path d="M${x} ${y}v2.500l-2 -.5z" fill="#8a1abb"/>`;
const shot=`<rect width="46" height="36" fill="#fdfdfd"/><rect width="46" height="5.500" fill="#23272a"/><path d="M38 3.500h7" stroke="#2f6fb5"/>${pie(23,14)}${pie(23,28)}<path d="M18 20h9M18 33.500h9" stroke="#bbb" stroke-width=".8"/>`;
const MINI={
empty:[25,side+`<rect y="22" width="46" height="3" fill="#252c31"/><rect y="22" width="6" height="3" fill="#3a4247"/>`],
files:[25,side+`<rect y="22" width="46" height="3" fill="#252c31"/><rect y="22" width="6" height="3" fill="#3a4247"/>`+dotsRow(4,3.500,'#e9eef2')+dotsRow(4,10.500,'#e9eef2')],
black:[32,`<rect width="46" height="32" fill="#1d1d1d"/><path d="M0 .8H46" stroke="#3c3c3c" stroke-width="1.600"/>`],
black2:[35,`<rect width="46" height="35" fill="#191919"/><path d="M0 1H46" stroke="#444" stroke-width="1.500"/>${lines(3,8,24,'#565656',4,2)}`],
shot:[36,shot],
sheet:[31,`<rect width="46" height="31" fill="#f4f4f4"/><path d="M0 0H46V2H0ZM0 0H8V31H0ZM8 18H46V20H8Z" fill="#1c1f22"/><rect x="2" y="4" width="4" height="6" fill="#ddd"/><rect x="2" y="13" width="4" height="6" fill="#ddd"/><rect x="2" y="22" width="4" height="6" fill="#ddd"/>${lines(4,11,32,'#aaa',4,2)}${lines(4,11,32,'#aaa',22,2)}`],
files2:[25,side+`<rect y="22" width="46" height="3" fill="#252c31"/>`+dotsRow(6,8,'#e9eef2')+dotsRow(6,16,'#e9eef2')],
list:[25,side+`<rect y="22" width="46" height="3" fill="#252c31"/>`+lines(7,9,30,'#56646c',5,2.700)],
files3:[25,side+`<rect y="22" width="46" height="3" fill="#252c31"/>`+dotsRow(6,5,'#5fb9e6')+dotsRow(6,12,'#5fb9e6')+dotsRow(5,19,'#d7e2e8')],
py:[35,`<rect width="46" height="35" rx="1.500" fill="#1b1b1b" stroke="#d8d8d8" stroke-width="1.300"/>${lines(5,3,30,'#777',17,2)}<path d="M3 28h38" stroke="#9b4a3e" stroke-width="1"/>`],
note:[35,`<rect width="46" height="35" fill="#252626"/><rect width="9" height="35" fill="#4b4d4f"/><rect x="9" width="10" height="35" fill="#343637"/>${lines(10,22,18,'#6d6d6d',4,2.800)}${lines(6,11,6,'#888',5,4.500)}`],
music:[39,`<rect width="46" height="39" fill="#101012"/><rect x="5" y="1.500" width="23" height="18" fill="#4d3a9c"/><rect x="7" y="9" width="7" height="9" fill="#7a63d8"/><path d="M16 14h10" stroke="#ddd" stroke-width="1"/><rect x="31" y="12" width="14" height="10" fill="#2b2b2b"/><path d="M33 17h10" stroke="#bbb" stroke-width=".8"/><circle cx="8" cy="22.500" r="1.500" fill="#47c35c"/>${lines(5,17,8,'#666',24,2.500)}<path d="M1 4v31" stroke="#8d5a34" stroke-width="1.500" stroke-dasharray="2 3"/>`],
table:[25,side+`<rect y="22" width="46" height="3" fill="#252c31"/><path d="M9 6h35M9 10h35M9 14h35M9 18h35M20 4v20M32 4v20" stroke="#4d6878" stroke-width=".9"/>`],
code:[42,`<rect width="46" height="42" fill="#fcfcfc"/><path d="M0 1H46" stroke="#5a5a5a" stroke-width="2"/>${lines(7,3,26,'#e0a288',5,4.600)}${lines(7,6,24,'#94c98d',7.500,4.600)}`],
blank:[41,`<rect width="46" height="41" fill="#fcfcfc"/><path d="M0 1H46" stroke="#5a5a5a" stroke-width="2"/><path d="M2 4.500h30" stroke="#d7a8c8" stroke-width=".8"/>`],
files4:[25,side+`<rect y="22" width="46" height="3" fill="#252c31"/>`+dotsRow(6,4.500,'#e9eef2')+dotsRow(6,11.500,'#e9eef2')+dotsRow(5,18.500,'#8fcbe9')],
term:[31,`<rect width="46" height="31" fill="#1c1c1c"/><path d="M0 1H46" stroke="#555" stroke-width="1.500"/>${lines(3,2,34,'#858585',4,2)}`],
vs:[40,`<rect width="46" height="40" fill="#1b1f24"/><rect width="3" height="40" fill="#30363d"/>${lines(12,13,24,'#7a6648',4,2.800)}${lines(9,5,7,'#44655a',6,3)}`]};
const THUMB={empty:22,files:22,black:28,black2:31,shot:30.500,sheet:27,files2:22,list:22,files3:22,py:31,note:30.500,music:34.500,table:22,code:42,blank:41,files4:22,term:27.500,vs:37};
define('dock-item',`:host{display:block;width:52.930px;height:70px;flex:none}
.a{display:flex;align-items:center;justify-content:center;height:61px;padding-top:3px;position:relative}
.m{display:block;width:46px;filter:drop-shadow(0 0 1px #0008)}
.m svg{display:block}
.x{position:absolute;right:2px;top:39.500px;width:16px}
.n{position:absolute;left:38px;top:9.500px;width:17px;height:18px;border-radius:9px;background:#e2513f;color:#fff;font-size:11px;display:flex;align-items:center;justify-content:center}
.d{width:6px;height:6px;border-radius:50%;background:#e3dfe4;margin:0 auto}
.l{position:absolute;left:5.500px;top:48px;width:42px;height:11px;border-radius:4px;background:#332d29cc;color:#fff;font-size:9.800px;line-height:10px;text-align:center}`,
e=>{const m=A(e,'mini');
const [h,s]=m?MINI[m]:[0,''];
const b=A(e,'badge'),n=A(e,'count');
return `<div class="a">${m?`<div class="m"><svg width="46" height="${THUMB[m]}" viewBox="0 0 46 ${h}" preserveAspectRatio="none">${s}</svg></div>${b?`<div class="x">${ic(b,15,15)}</div>`:''}`:ic(A(e,'icon'),+A(e,'iw','39.5'),+A(e,'ih','39.5'))}${n?`<div class="n">${n}</div>`:''}${A(e,'label')?`<div class="l">${A(e,'label')}</div>`:''}</div>${e.hasAttribute('run')?'<div class="d"></div>':''}`});
define('app-dock',`:host{display:flex;width:2813px;height:71px;margin:9.500px auto 0 33px;padding-left:7px;border-radius:19px;position:relative;box-shadow:0 0 0 1px #0008,inset 0 0 0 2px #ffffff30;
background:linear-gradient(90deg,#5f4a46 0,#54423f 5%,#3d393e 8%,#284553 11%,#27495b 19%,#2e4653 22%,#5b4642 26%,#563f3b 30%,#474950 33%,#525e72 37%,#566076 49%,#55505a 52%,#513c3e 55%,#54505a 57%,#46566d 59%,#56606e 65%,#656a70 68%,#65525a 73%,#4e4640 77%,#40312c 80%,#71523a 84%,#5e4538 90%,#4d3e38)}
i{width:23.700px;display:flex;align-items:center;justify-content:center}i::before{content:"";width:2px;height:50px;background:#8d97a6}`,
()=>{const it=(i,x='')=>`<dock-item icon="${i}" ${x}></dock-item>`,mn=(m,b,x='')=>`<dock-item mini="${m}" badge="${b}" ${x}></dock-item>`;
return it('finder','run')+it('launchpad')+it('safari','run')+it('chrome','run')+it('messages','run count="13"')+it('mail')+it('maps')+it('photos')+it('facetime','run')+it('calendar')+it('podcasts')+it('contacts')+it('reminders','count="1"')+it('notes','run')+it('freeform')+it('tv')+it('music')+it('keynote')+it('numbers')+it('pages')+it('appstore')+it('settings','count="2"')+'<i></i>'+
['textedit','preview','telegram','terminal','redmail','vscode','spotify','idle'].map(n=>it(n,'run')).join('')+'<i></i>'+
it('doc','iw="32" ih="46"')+mn('empty','finder')+mn('files','finder')+mn('empty','finder')+mn('black','textedit')+mn('black2','preview')+mn('shot','preview')+mn('shot','preview')+mn('sheet','preview')+mn('files2','finder')+mn('list','finder')+mn('files3','finder')+mn('py','','label="Python…"')+mn('note','notes')+mn('music','spotify')+mn('table','finder')+mn('code','idle')+mn('blank','idle')+mn('files4','finder')+mn('term','textedit')+mn('vs','vscode')+it('trash','iw="34" ih="45"')});

define('mac-desktop',`:host{display:flex;flex-direction:column;width:2880px;height:1800px;position:relative;overflow:hidden;background:#1b6fae}
.wall{position:absolute;left:0;right:0;bottom:0;height:140px;background:
linear-gradient(#0000 0,#0006 56px,#0004 72px,#0000 118px),
linear-gradient(90deg,#8f6d66 0,#9a756e 4%,#7b5a55 7.500%,#2c2425 9.500%,#241f22 10.800%,#154b5e 11%,#1a6272 15%,#174a5c 20%,#155364 23%,#a87563 23.500%,#a9765f 29.500%,#3b2a28 29.700%,#b58a63 30%,#b08866 34%,#7a4a3e 34.300%,#7c5046 35.700%,#7f90ad 36.200%,#93a2bb 44%,#7488a8 51.900%,#1a1414 52.200%,#2b1b1c 54%,#6d4131 55%,#3f2a25 57.200%,#1f3b5c 57.500%,#8598b8 59%,#b3bfce 66%,#9aa7b6 68.500%,#a06a58 69.200%,#93604e 73%,#b38257 75.500%,#9d7048 77%,#35231c 78%,#5b3a2a 79.300%,#a87b56 80%,#a87a54 84%,#20181a 85%,#1d1717 88%,#c08f66 89%,#b58560 91.500%,#1f1c1d 92.500%,#474747 93.500%,#b88a66 94%,#27201d 95.500%,#b58662 97%,#b88b6b)}
menu-bar,browser-window,app-dock{position:relative}`,
`<div class="wall"></div><menu-bar></menu-bar><browser-window></browser-window><app-dock></app-dock><zoom-bubble></zoom-bubble>`);
</script>
</body>
</html>
